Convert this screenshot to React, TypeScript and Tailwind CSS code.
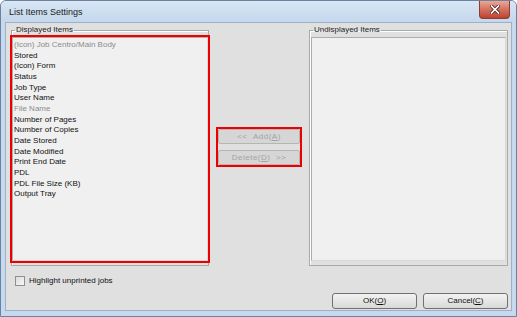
const displayed = [
  { label: "(Icon) Job Centro/Main Body", muted: true },
  { label: "Stored" },
  { label: "(Icon) Form" },
  { label: "Status" },
  { label: "Job Type" },
  { label: "User Name" },
  { label: "File Name", muted: true },
  { label: "Number of Pages" },
  { label: "Number of Copies" },
  { label: "Date Stored" },
  { label: "Date Modified" },
  { label: "Print End Date" },
  { label: "PDL" },
  { label: "PDL File Size (KB)" },
  { label: "Output Tray" },
];

function GroupBox({ title, children }: { title: string; children: React.ReactNode }) {
  return (
    <fieldset className="h-[241px] border border-[#a9a9a9] shadow-[inset_1px_1px_0_#ffffff] px-0 pb-[2px] m-0">
      <legend className="ml-[3px] px-[1px] text-[8px] leading-[10px] text-[#1a1a1a]">{title}</legend>
      {children}
    </fieldset>
  );
}

function DisabledButton({ children }: { children: React.ReactNode }) {
  return (
    <div className="h-[15px] w-[82px] flex items-center justify-center border border-[#b5b5b5] bg-[#d6d6d6] rounded-[2px] text-[8px] text-[#a3a3a3]">
      {children}
    </div>
  );
}

function PushButton({ children }: { children: React.ReactNode }) {
  return (
    <div className="h-[16px] w-[85px] flex items-center justify-center border border-[#707070] rounded-[3px] bg-gradient-to-b from-[#f3f3f3] to-[#d9d9d9] text-[8px] text-[#111]">
      {children}
    </div>
  );
}

export default function App() {
  return (
    <div className="w-[517px] h-[317px] flex flex-col bg-[#c6d9ee] border border-[#6d819c] rounded-t-[6px] font-['Liberation_Sans',Arial,sans-serif]">
      <div className="h-[21px] flex items-start justify-between pl-[8px] pr-[6px] bg-gradient-to-b from-[#d8e6f5] to-[#c4d7ec] rounded-t-[5px]">
        <span className="mt-[6px] text-[9px] leading-[11px] text-[#1b1b1b]">List Items Settings</span>
        <div className="w-[31px] h-[18px] flex items-center justify-center border border-[#8d3b33] border-t-0 rounded-b-[4px] bg-gradient-to-b from-[#e9a897] via-[#d2715f] to-[#c0402f]">
          <svg width={10} height={9} viewBox="0 0 10 9">
            <path d="M1.5 1L8.5 8M8.5 1L1.5 8" stroke="#4a1d18" strokeWidth={3.2} strokeLinecap="square" />
            <path d="M1.5 1L8.5 8M8.5 1L1.5 8" stroke="#ffffff" strokeWidth={1.7} strokeLinecap="square" />
          </svg>
        </div>
      </div>

      <div className="flex-1 mx-[4px] mb-[5px] border border-[#9cb0c8] bg-[#e0e0e0] flex flex-col pt-[2px] pl-[5px] pr-[3px]">
        <div className="grid grid-cols-[198px_100px_199px]">
          <GroupBox title="Displayed Items">
            <div className="mt-[2px] h-[224px] border border-[#acacac] border-r-[#d8d8d8] border-b-[#d8d8d8] bg-[#f0f0f0] outline-2 outline-[#ee0000] pl-[1px] pt-[2px] text-[8px] leading-[10.65px]">
              {displayed.map((item) => (
                <div key={item.label} className={item.muted ? "text-[#8c8c8c]" : "text-[#111]"}>
                  {item.label}
                </div>
              ))}
            </div>
          </GroupBox>

          <div className="pl-[7px] pt-[102px]">
            <div className="w-[86px] border-2 border-[#ee0000] flex flex-col gap-[6px]">
              <DisabledButton>
                <span className="tracking-[0.5px]">&lt;&lt;&nbsp;&nbsp;Add(<span className="underline">A</span>)</span>
              </DisabledButton>
              <DisabledButton>
                <span className="tracking-[0.5px]">Delete(<span className="underline">D</span>)&nbsp;&nbsp;&gt;&gt;</span>
              </DisabledButton>
            </div>
          </div>

          <GroupBox title="Undisplayed Items">
            <div className="mx-[1px] mt-[2px] h-[224px] border border-[#acacac] border-r-[#d8d8d8] border-b-[#d8d8d8] bg-[#f0f0f0]" />
          </GroupBox>
        </div>

        <div className="mt-[10px] ml-[4px] flex items-center gap-[4px]">
          <div className="w-[10px] h-[10px] border border-[#8e8f8f] bg-gradient-to-br from-[#dcdcdc] to-[#f7f7f7]" />
          <span className="text-[8px] leading-[10px] text-[#111]">Highlight unprinted jobs</span>
        </div>

        <div className="mt-[7px] flex justify-end gap-[6px]">
          <PushButton>
            OK(<span className="underline">O</span>)
          </PushButton>
          <PushButton>
            Cancel(<span className="underline">C</span>)
          </PushButton>
        </div>
      </div>
    </div>
  );
}
